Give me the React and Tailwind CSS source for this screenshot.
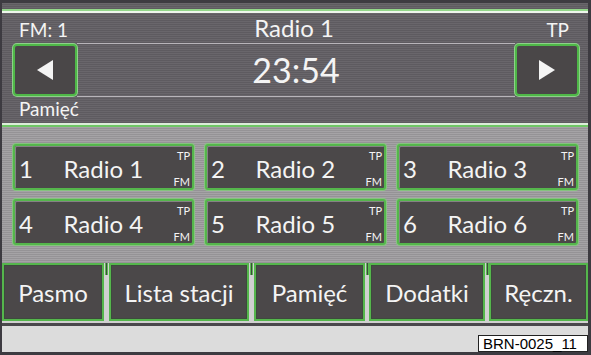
const font = { fontFamily: 'Lato, "Open Sans", sans-serif' };

const presets = [
  { n: 1, name: 'Radio 1' },
  { n: 2, name: 'Radio 2' },
  { n: 3, name: 'Radio 3' },
  { n: 4, name: 'Radio 4' },
  { n: 5, name: 'Radio 5' },
  { n: 6, name: 'Radio 6' },
];

const tabs = [
  { label: 'Pasmo', w: 'w-[102px]' },
  { label: 'Lista stacji', w: 'w-[140px]' },
  { label: 'Pamięć', w: 'w-[111px]' },
  { label: 'Dodatki', w: 'w-[116px]' },
  { label: 'Ręczn.', w: 'flex-1' },
];

function Arrow({ dir }) {
  return (
    <div className="flex h-[52px] w-[64px] items-center justify-center rounded-[4px] border-2 border-[#4fb848] bg-[#4a4748] shadow-[0_0_0_1px_#8fd08a]">
      <svg width="16" height="20" viewBox="0 0 16 20">
        {dir === 'left' ? (
          <polygon points="16,0 16,20 0,10" fill="#f4f4f4" />
        ) : (
          <polygon points="0,0 0,20 16,10" fill="#f4f4f4" />
        )}
      </svg>
    </div>
  );
}

function Preset({ n, name }) {
  return (
    <div className="flex h-[46px] rounded-[3px] border-2 border-[#55b64c] bg-[#4b4849] text-[#f4f4f4] shadow-[0_0_0_1px_#86c47f,inset_1px_1px_0_#858284]">
      <span className="flex items-center pl-[4px] pt-[4px] text-[24px] leading-none">{n}</span>
      <span className="flex flex-1 items-center justify-center pt-[4px] text-[24px] leading-none">{name}</span>
      <span className="flex flex-col items-end justify-between pb-[1px] pr-[2px] pt-[4px] text-[11px] leading-none">
        <span>TP</span>
        <span>FM</span>
      </span>
    </div>
  );
}

function Separator({ w }) {
  return (
    <div className={`flex ${w} flex-col items-center bg-[#d0d0d0]`}>
      <div className="h-[12px] w-[3px] border-x border-[#5cb853] bg-[#3f4a3e]" />
    </div>
  );
}

export default function App() {
  return (
    <div
      className="flex h-[355px] w-[591px] flex-col bg-[#3d3b41] pb-[3px] pl-[2px] pr-[3px] pt-[3px] text-[#f4f4f4]"
      style={font}
    >
      {/* header */}
      <div className="flex h-[124px] flex-col bg-[image:repeating-linear-gradient(180deg,#69666b_0px,#69666b_1px,#5e5b60_1px,#5e5b60_2px)]">
        <div className="h-[6px]" />
        <div className="h-[2px] bg-[#93d68a]" />
        <div className="h-[2px] bg-[#eef6ec]" />
        <div className="flex h-[30px] items-baseline pl-[17px] pr-[19px] pt-[1px]">
          <span className="flex-1 text-[19px] leading-[28px]">FM: 1</span>
          <span className="text-[24px] leading-[28px]">Radio 1</span>
          <span className="flex flex-1 justify-end text-[19px] leading-[28px]">TP</span>
        </div>
        <div className="flex h-[54px] items-center pl-[11px] pr-[9px]">
          <Arrow dir="left" />
          <div className="flex h-[54px] flex-1 items-center justify-center border-y border-[#b8b5ba] text-[34px] leading-none">
            23:54
          </div>
          <Arrow dir="right" />
        </div>
        <div className="h-[24px] pl-[17px] text-[19px] leading-[24px]">Pamięć</div>
        <div className="h-[2px]" />
        <div className="h-[2px] bg-[#dceeda]" />
        <div className="h-[2px] bg-[#6fc766]" />
      </div>

      {/* presets */}
      <div className="grid h-[136px] grid-cols-3 content-start gap-x-[11px] gap-y-[9px] bg-[image:repeating-linear-gradient(180deg,#a5a3a6_0px,#a5a3a6_1px,#959396_1px,#959396_2px)] pl-[11px] pr-[10px] pt-[17px]">
        {presets.map((p) => (
          <Preset key={p.n} {...p} />
        ))}
      </div>

      {/* bottom tabs */}
      <div className="flex h-[58px]">
        {tabs.map((t, i) => (
          <div key={t.label} className={`flex ${t.w === 'flex-1' ? 'flex-1' : ''}`}>
            {i > 0 && <Separator w={i > 2 ? 'w-[4px]' : 'w-[5px]'} />}
            <div
              className={`flex ${t.w === 'flex-1' ? 'flex-1' : t.w} items-center justify-center border-2 border-[#55b64c] bg-[#4b4849] pt-[2px] text-[24px] leading-none shadow-[inset_0_0_0_1px_#3e4a3d]`}
            >
              {t.label}
            </div>
          </div>
        ))}
      </div>
      <div className="h-[2px] bg-[#d0d0d0]" />
      <div className="h-[3px] bg-[#4a484c]" />
      <div className="flex flex-1 items-end justify-end bg-[#dcdcdc]">
        <div
          className="flex h-[17px] w-[110px] items-center border border-[#222] bg-white pl-[4px] text-[15px] leading-none text-black"
          style={{ fontFamily: '"Liberation Sans", Arial, sans-serif' }}
        >
          BRN-0025_11
        </div>
      </div>
    </div>
  );
}
